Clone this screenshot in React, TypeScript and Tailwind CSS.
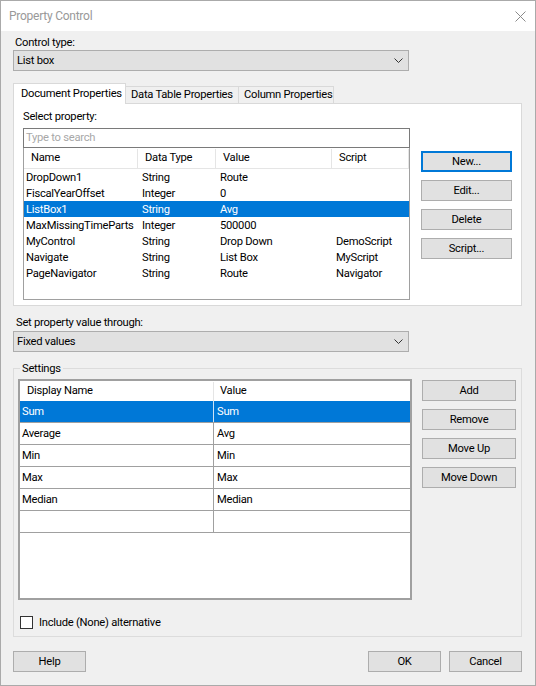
import React from "react";

const properties = [
  ["DropDown1", "String", "Route", ""],
  ["FiscalYearOffset", "Integer", "0", ""],
  ["ListBox1", "String", "Avg", ""],
  ["MaxMissingTimeParts", "Integer", "500000", ""],
  ["MyControl", "String", "Drop Down", "DemoScript"],
  ["Navigate", "String", "List Box", "MyScript"],
  ["PageNavigator", "String", "Route", "Navigator"],
];

const settings = [
  ["Sum", "Sum"],
  ["Average", "Avg"],
  ["Min", "Min"],
  ["Max", "Max"],
  ["Median", "Median"],
  ["", ""],
];

function Chevron() {
  return (
    <svg width="9" height="5" viewBox="0 0 9 5" className="text-[#333]">
      <path d="M0.5 0.5 L4.5 4.5 L8.5 0.5" fill="none" stroke="currentColor" strokeWidth="1" />
    </svg>
  );
}

function Combo({ value }: { value: string }) {
  return (
    <div className="flex h-[21px] w-[396px] items-center justify-between border border-[#adadad] bg-[#e1e1e1] pl-[3px] pr-[5px]">
      <span className="pt-[1px]">{value}</span>
      <Chevron />
    </div>
  );
}

function Button({
  label,
  width,
  primary,
}: {
  label: string;
  width: string;
  primary?: boolean;
}) {
  return (
    <div
      className={`flex h-[21px] items-center justify-center bg-[#e1e1e1] pt-[1px] ${width} ${
        primary ? "border-2 border-[#0078d7]" : "border border-[#adadad]"
      }`}
    >
      {label}
    </div>
  );
}

export default function App() {
  return (
    <div className="flex h-[686px] w-[536px] flex-col whitespace-nowrap border border-[#aaaaaa] bg-[#f0f0f0] font-[Roboto,sans-serif] text-[11.2px] tracking-[-0.25px] text-black">
      {/* title bar */}
      <div className="flex h-[30px] items-center justify-between bg-white pl-[8px] pr-[9px]">
        <span className="text-[12px] text-[#999999]">Property Control</span>
        <svg width="11" height="11" viewBox="0 0 11 11">
          <path d="M0.5 0.5 L10.5 10.5 M10.5 0.5 L0.5 10.5" stroke="#8a8a8a" strokeWidth="1" />
        </svg>
      </div>

      <div className="flex flex-col pl-[12px]">
        <div className="ml-[2px] mt-[4px] h-[15px] leading-[16px]">Control type:</div>
        <Combo value="List box" />

        {/* tabs */}
        <div className="mt-[12px] flex h-[20px] items-end">
          <div className="relative z-10 -mb-px flex h-[21px] w-[113px] items-center border border-b-0 border-[#d9d9d9] bg-white pl-[7px]">
            Document Properties
          </div>
          <div className="flex h-[17px] w-[113px] items-center border border-b-0 border-l-0 border-[#d9d9d9] pl-[5px] pt-[1px]">
            Data Table Properties
          </div>
          <div className="flex h-[17px] w-[95px] items-center border border-b-0 border-l-0 border-[#d9d9d9] pl-[5px] pt-[1px]">
            Column Properties
          </div>
        </div>

        {/* tab panel */}
        <div className="flex h-[203px] w-[509px] border border-[#d9d9d9] bg-white">
          <div className="ml-[9px] flex flex-col">
            <div className="mt-[5px] h-[15px] leading-[16px]">Select property:</div>
            <div className="mt-[4px] flex h-[20px] w-[387px] items-center border border-[#7a7a7a] pl-[2px] pt-[1px] text-[#a8a8a8]">
              Type to search
            </div>
            <div className="flex h-[152px] w-[387px] flex-col border border-t-0 border-[#a0a0a0] bg-white">
              <div className="flex h-[21px] shrink-0 border-b border-[#e5e5e5] pt-[1px]">
                <div className="flex w-[114px] items-center border-r border-[#e5e5e5] pl-[7px]">Name</div>
                <div className="flex w-[78px] items-center border-r border-[#e5e5e5] pl-[7px]">Data Type</div>
                <div className="flex w-[116px] items-center border-r border-[#e5e5e5] pl-[7px]">Value</div>
                <div className="flex flex-1 items-center border-r border-[#e5e5e5] pl-[7px]">Script</div>
              </div>
              {properties.map((p, i) => (
                <div
                  key={p[0]}
                  className={`flex h-[16px] shrink-0 items-center pt-[2px] ${i === 2 ? "bg-[#0078d7] text-white" : ""}`}
                >
                  <div className="w-[114px] pl-[2px]">{p[0]}</div>
                  <div className="w-[78px] pl-[4px]">{p[1]}</div>
                  <div className="w-[116px] pl-[4px]">{p[2]}</div>
                  <div className="flex-1 pl-[4px]">{p[3]}</div>
                </div>
              ))}
            </div>
          </div>
          <div className="ml-[11px] mt-[47px] flex flex-col gap-[8px]">
            <Button label="New..." width="w-[91px]" primary />
            <Button label="Edit..." width="w-[91px]" />
            <Button label="Delete" width="w-[91px]" />
            <Button label="Script..." width="w-[91px]" />
          </div>
        </div>

        <div className="ml-[3px] mt-[9px] h-[15px] leading-[16px]">Set property value through:</div>
        <div className="mt-[1px]">
          <Combo value="Fixed values" />
        </div>

        {/* settings group */}
        <div className="relative mt-[16px] flex h-[269px] w-[509px] flex-col border border-[#dcdcdc]">
          <span className="absolute left-[6px] top-[-8px] bg-[#f0f0f0] px-[2px] leading-[16px]">Settings</span>
          <div className="flex">
            <div className="ml-[4px] mt-[10px] flex h-[221px] w-[394px] flex-col border-2 border-[#a0a0a0] bg-white">
              <div className="flex h-[20px] shrink-0 pt-[1px]">
                <div className="flex w-[194px] items-center border-r border-[#e5e5e5] pl-[7px]">Display Name</div>
                <div className="flex flex-1 items-center pl-[6px]">Value</div>
              </div>
              {settings.map((s, i) => (
                <div
                  key={i}
                  className={`flex h-[22px] shrink-0 border-b border-[#a0a0a0] ${
                    i === 0 ? "bg-[#0078d7] text-white" : ""
                  }`}
                >
                  <div
                    className={`flex w-[194px] items-center border-r pl-[2px] pt-[1px] ${
                      i === 0 ? "border-[#cfe3f5]" : "border-[#a0a0a0]"
                    }`}
                  >
                    {s[0]}
                  </div>
                  <div className="flex flex-1 items-center pl-[3px] pt-[1px]">{s[1]}</div>
                </div>
              ))}
            </div>
            <div className="ml-[10px] mt-[11px] flex flex-col gap-[8px]">
              <Button label="Add" width="w-[94px]" />
              <Button label="Remove" width="w-[94px]" />
              <Button label="Move Up" width="w-[94px]" />
              <Button label="Move Down" width="w-[94px]" />
            </div>
          </div>
          <div className="ml-[6px] mt-[14px] flex items-center gap-[6px]">
            <div className="h-[13px] w-[13px] border border-[#333333] bg-white" />
            <span className="pt-[1px]">Include (None) alternative</span>
          </div>
        </div>

        {/* dialog buttons */}
        <div className="mt-[14px] flex w-[509px] items-center">
          <Button label="Help" width="w-[73px]" />
          <div className="flex-1" />
          <Button label="OK" width="w-[73px]" />
          <div className="w-[8px]" />
          <Button label="Cancel" width="w-[73px]" />
        </div>
      </div>
    </div>
  );
}
